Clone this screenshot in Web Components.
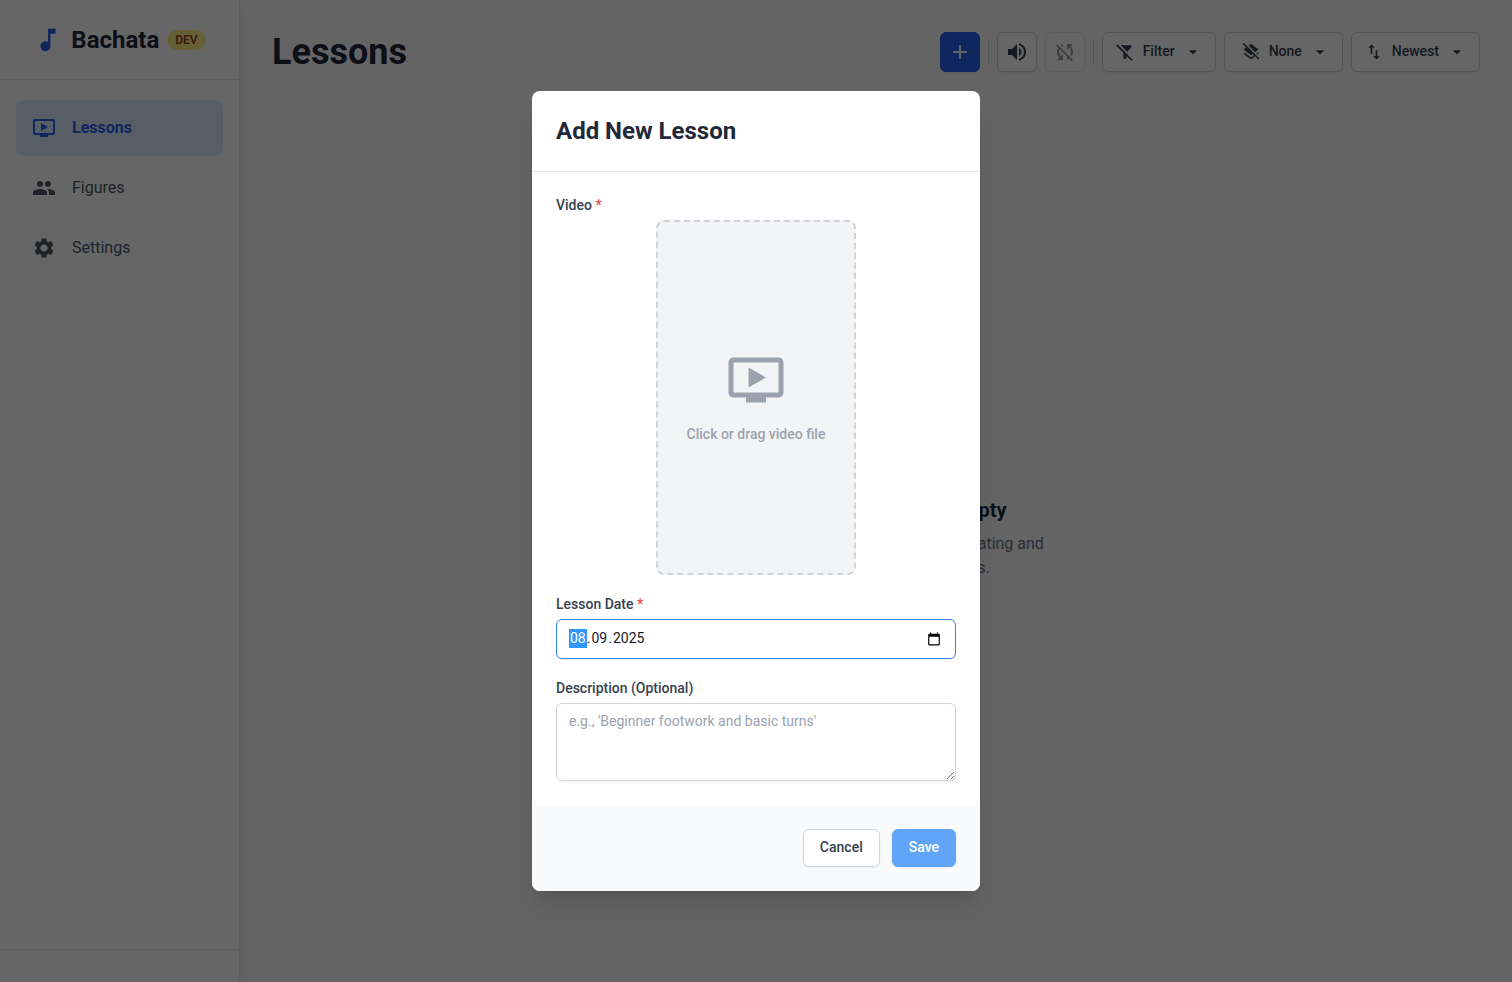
<!DOCTYPE html>
<html lang="en">
<head>
<meta charset="utf-8">
<title>Bachata</title>
<style>
  html, body { margin: 0; height: 100%; overflow: hidden; }
  body { font-family: Roboto, "Liberation Sans", sans-serif; font-size: 16px; line-height: 24px; color: #1f2937; background: #f9fafb; }
</style>
</head>
<body>
<bachata-app></bachata-app>
<script>
const ICONS = {
  note: 'M12 3v10.55c-.59-.34-1.27-.55-2-.55-2.21 0-4 1.79-4 4s1.79 4 4 4 4-1.79 4-4V7h4V3h-6z',
  video: 'M21 3H3c-1.11 0-2 .89-2 2v12c0 1.1.89 2 2 2h5v2h8v-2h5c1.1 0 1.99-.9 1.99-2L23 5c0-1.1-.9-2-2-2zm0 14H3V5h18v12zm-5-6l-7 4V7z',
  people: 'M16 11c1.66 0 2.99-1.34 2.99-3S17.66 5 16 5c-1.66 0-3 1.34-3 3s1.34 3 3 3zm-8 0c1.66 0 2.99-1.34 2.99-3S9.66 5 8 5C6.34 5 5 6.34 5 8s1.34 3 3 3zm0 2c-2.33 0-7 1.17-7 3.5V19h14v-2.5c0-2.33-4.67-3.5-7-3.5zm8 0c-.29 0-.62.02-.97.05 1.16.84 1.97 1.97 1.97 3.45V19h6v-2.5c0-2.33-4.67-3.5-7-3.5z',
  settings: 'M19.14 12.94c.04-.3.06-.61.06-.94 0-.32-.02-.64-.07-.94l2.03-1.58c.18-.14.23-.41.12-.61l-1.92-3.32c-.12-.22-.37-.29-.59-.22l-2.39.96c-.5-.38-1.03-.7-1.62-.94l-.36-2.54c-.04-.24-.24-.41-.48-.41h-3.84c-.24 0-.43.17-.47.41l-.36 2.54c-.59.24-1.13.57-1.62.94l-2.39-.96c-.22-.08-.47 0-.59.22L2.74 8.87c-.12.21-.08.47.12.61l2.03 1.58c-.05.3-.09.63-.09.94s.02.64.07.94l-2.03 1.58c-.18.14-.23.41-.12.61l1.92 3.32c.12.22.37.29.59.22l2.39-.96c.5.38 1.03.7 1.62.94l.36 2.54c.05.24.24.41.48.41h3.84c.24 0 .44-.17.47-.41l.36-2.54c.59-.24 1.13-.56 1.62-.94l2.39.96c.22.08.47 0 .59-.22l1.92-3.32c.12-.22.07-.47-.12-.61l-2.01-1.58zM12 15.6c-1.98 0-3.6-1.62-3.6-3.6s1.62-3.6 3.6-3.6 3.6 1.62 3.6 3.6-1.62 3.6-3.6 3.6z',
  add: 'M19 13h-6v6h-2v-6H5v-2h6V5h2v6h6v2z',
  volume: 'M3 9v6h4l5 5V4L7 9H3zm13.5 3c0-1.77-1.02-3.29-2.5-4.03v8.05c1.48-.73 2.5-2.25 2.5-4.02zM14 3.23v2.06c2.89.86 5 3.54 5 6.71s-2.11 5.85-5 6.71v2.06c4.01-.91 7-4.49 7-8.77s-2.99-7.86-7-8.77z',
  syncOff: 'M10 6.35V4.26c-.8.21-1.55.54-2.23.96l1.46 1.46c.25-.12.5-.24.77-.33zm-7.14-.94l2.36 2.36C4.45 8.99 4 10.44 4 12c0 2.21.91 4.2 2.36 5.64L4 20h6v-6l-2.24 2.24C6.68 15.15 6 13.66 6 12c0-1 .25-1.94.68-2.77l8.08 8.08c-.25.13-.5.25-.77.34v2.09c.8-.21 1.55-.54 2.23-.96l2.36 2.36 1.27-1.27L4.14 4.14 2.86 5.41zM20 4h-6v6l2.24-2.24C17.32 8.85 18 10.34 18 12c0 1-.25 1.94-.68 2.77l1.46 1.46C19.55 15.01 20 13.56 20 12c0-2.21-.91-4.2-2.36-5.64L20 4z',
  filterOff: 'M19.79 5.61C20.3 4.95 19.83 4 19 4H6.83l7.97 7.97 4.99-6.36zM2.81 2.81L1.39 4.22 10 13v6c0 .55.45 1 1 1h2c.55 0 1-.45 1-1v-2.17l5.78 5.78 1.41-1.41L2.81 2.81z',
  layersOff: 'M19.81 14.99l1.19-.92-1.43-1.43-1.19.92 1.43 1.43zm-.45-4.72L21 9l-9-7-2.91 2.27 7.87 7.88 2.4-1.88zM3.27 1L2 2.27l4.22 4.22L3 9l1.63 1.27L12 16l2.1-1.63 1.43 1.43L12 18.54l-7.37-5.73L3 14.07l9 7 4.95-3.85L20.73 21 22 19.73 3.27 1z',
  sort: 'M16 17.01V10h-2v7.01h-3L15 21l4-3.99h-3zM9 3L5 6.99h3V14h2V6.99h3L9 3z',
  caret: 'M7 10l5 5 5-5z',
  calendar: 'M20 3h-1V1h-2v2H7V1H5v2H4c-1.1 0-2 .9-2 2v16c0 1.1.9 2 2 2h16c1.1 0 2-.9 2-2V5c0-1.1-.9-2-2-2zm0 18H4V8h16v13z'
};

function define(name, render) {
  customElements.define(name, class extends HTMLElement {
    constructor() { super(); this.attachShadow({ mode: 'open' }); }
    connectedCallback() { this.shadowRoot.innerHTML = render(this); }
  });
}

define('b-icon', el => {
  const s = el.getAttribute('size') || 24;
  return `<style>:host{display:block;flex:none;width:${s}px;height:${s}px}svg{display:block;width:100%;height:100%;fill:currentColor}</style>
  <svg viewBox="0 0 24 24" aria-hidden="true"><path d="${ICONS[el.getAttribute('name')]}"/></svg>`;
});

define('nav-item', el => `<style>
  :host{display:flex;align-items:center;gap:16px;height:56px;padding:0 16px;box-sizing:border-box;border-radius:8px;color:#4b5563}
  :host([active]){background:#dbeafe;color:#2563eb;font-weight:700}
  </style><b-icon name="${el.getAttribute('icon')}"></b-icon><span><slot></slot></span>`);

define('app-sidebar', () => `<style>
  :host{display:flex;flex-direction:column;width:240px;box-sizing:border-box;flex:none;background:#fff;border-right:1px solid #e5e7eb;box-shadow:0 10px 15px -3px rgba(0,0,0,.1),0 4px 6px -4px rgba(0,0,0,.1);z-index:1}
  header{display:flex;align-items:center;justify-content:center;gap:8px;height:80px;box-sizing:border-box;border-bottom:1px solid #e5e7eb}
  b-icon{color:#2563eb}
  .name{font-size:24px;line-height:32px;font-weight:700;color:#1f2937}
  .badge{font-size:12px;line-height:16px;font-weight:600;padding:2px 8px;border-radius:10px;background:#fef08a;color:#854d0e}
  nav{display:flex;flex-direction:column;gap:4px;padding:20px 16px;flex:1}
  footer{height:32px;border-top:1px solid #e5e7eb}
  </style>
  <header><b-icon name="note" size="30"></b-icon><span class="name">Bachata</span><span class="badge">DEV</span></header>
  <nav><nav-item icon="video" active>Lessons</nav-item><nav-item icon="people">Figures</nav-item><nav-item icon="settings">Settings</nav-item></nav>
  <footer></footer>`);

define('icon-button', el => `<style>
  :host{display:flex;align-items:center;justify-content:center;width:40px;height:40px;box-sizing:border-box;border:1px solid #d1d5db;border-radius:6px;background:#fff;color:#374151;box-shadow:0 1px 2px rgba(0,0,0,.05)}
  :host([primary]){background:#2563eb;border-color:#2563eb;color:#fff}
  :host([disabled]){opacity:.5}
  </style><b-icon name="${el.getAttribute('icon')}"></b-icon>`);

define('menu-button', el => `<style>
  :host{display:flex;align-items:center;gap:8px;height:40px;box-sizing:border-box;padding:0 12px;border:1px solid #d1d5db;border-radius:6px;background:#fff;color:#374151;font-size:14px;line-height:20px;font-weight:500;box-shadow:0 1px 2px rgba(0,0,0,.05)}
  :host([inset]){padding-left:16px}
  span{padding-bottom:2px}
  </style><b-icon name="${el.getAttribute('icon')}" size="20"></b-icon><span><slot></slot></span><b-icon name="caret" size="20"></b-icon>`);

define('page-header', () => `<style>
  :host{display:flex;align-items:center;justify-content:space-between;height:40px;padding:32px}
  h1{margin:0;font-size:36px;line-height:40px;font-weight:700;color:#1f2937}
  .tools{display:flex;align-items:center;gap:8px}
  i{width:1px;height:24px;background:#d1d5db}
  </style><h1>Lessons</h1><div class="tools">
  <icon-button icon="add" primary></icon-button><i></i>
  <icon-button icon="volume"></icon-button><icon-button icon="syncOff" disabled></icon-button><i></i>
  <menu-button icon="filterOff">Filter</menu-button><menu-button icon="layersOff" inset>None</menu-button><menu-button icon="sort">Newest</menu-button></div>`);

define('empty-state', () => `<style>
  :host{display:flex;flex-direction:column;align-items:center;justify-content:center;flex:1;text-align:center;padding-bottom:11px}
  h2{margin:0 0 8px;font-size:20px;line-height:28px;font-weight:700;color:#1f2937}
  p{margin:0;color:#6b7280}
  </style><h2>Your Lesson Library is Empty</h2><p>Add your first lesson video to start creating and<br>organizing your bachata figures.</p>`);

define('form-label', el => `<style>
  :host{display:block;font-size:14px;line-height:20px;font-weight:500;color:#374151;margin-bottom:4px}
  b{color:#ef4444;font-weight:500}
  .t{position:relative;top:-1px}
  </style><span class="t"><slot></slot>${el.hasAttribute('required') ? ' <b>*</b>' : ''}</span>`);

define('drop-zone', () => `<style>
  :host{display:flex;flex-direction:column;align-items:center;justify-content:center;gap:14px;width:200px;aspect-ratio:9/16;box-sizing:border-box;margin:0 auto;border:2px dashed #d1d5db;border-radius:8px;background:#f3f4f6;color:#9ca3af;font-size:14px;line-height:20px;font-weight:500}
  </style><b-icon name="video" size="60"></b-icon><span>Click or drag video file</span>`);

define('date-field', () => `<style>
  :host{display:flex;align-items:center;height:40px;box-sizing:border-box;padding:0 14px 0 12px;border:1px solid #3b82f6;border-radius:6px;background:#fff;font-size:14px;line-height:19px;color:#111827;box-shadow:0 1px 2px rgba(0,0,0,.05)}
  .v{display:flex;flex:1;padding-bottom:1px}
  .v span{padding:0 1px}
  .v .sel{background:#3297fd;color:#fff}
  b-icon{color:#000;margin-bottom:1px}
  </style><div class="v"><span class="sel">08</span>.<span>09</span>.<span>2025</span></div><b-icon name="calendar" size="14"></b-icon>`);

define('text-area', el => `<style>
  :host{display:block}
  textarea{display:block;width:100%;height:78px;box-sizing:border-box;margin:0;padding:7px 12px 9px;border:1px solid #d1d5db;border-radius:6px;background:#fff;font:14px/20px Roboto,"Liberation Sans",sans-serif;color:#111827;box-shadow:0 1px 2px rgba(0,0,0,.05)}
  textarea::placeholder{color:#9ca3af}
  </style><textarea placeholder="${el.getAttribute('placeholder')}"></textarea>`);

define('form-button', () => `<style>
  :host{display:block;padding:8px 16px;border:1px solid #d1d5db;border-radius:6px;background:#fff;color:#374151;font-size:14px;line-height:20px;font-weight:500;box-shadow:0 1px 2px rgba(0,0,0,.05)}
  :host([primary]){background:#60a5fa;border-color:#60a5fa;color:#fff}
  span{position:relative;top:-1px}
  </style><span><slot></slot></span>`);

define('lesson-dialog', () => `<style>
  :host{display:block;width:448px;border-radius:8px;background:#fff;overflow:hidden;box-shadow:0 20px 25px -5px rgba(0,0,0,.1),0 8px 10px -6px rgba(0,0,0,.1)}
  header{padding:24px;border-bottom:1px solid #e5e7eb}
  h2{margin:0;font-size:24px;line-height:32px;font-weight:700;color:#1f2937}
  .body{display:flex;flex-direction:column;gap:20px;padding:24px}
  footer{display:flex;justify-content:flex-end;gap:12px;padding:24px;background:#f9fafb}
  </style>
  <header><h2>Add New Lesson</h2></header>
  <div class="body">
    <div><form-label required>Video</form-label><drop-zone></drop-zone></div>
    <div><form-label required>Lesson Date</form-label><date-field></date-field></div>
    <div><form-label>Description (Optional)</form-label><text-area placeholder="e.g., 'Beginner footwork and basic turns'"></text-area></div>
  </div>
  <footer><form-button>Cancel</form-button><form-button primary>Save</form-button></footer>`);

define('bachata-app', () => `<style>
  :host{display:flex;height:100vh}
  main{display:flex;flex-direction:column;flex:1;background:#f9fafb}
  .overlay{position:absolute;inset:0;z-index:2;display:flex;align-items:center;justify-content:center;background:rgba(0,0,0,.6)}
  </style>
  <app-sidebar></app-sidebar>
  <main><page-header></page-header><empty-state></empty-state></main>
  <div class="overlay"><lesson-dialog></lesson-dialog></div>`);
</script>
</body>
</html>
